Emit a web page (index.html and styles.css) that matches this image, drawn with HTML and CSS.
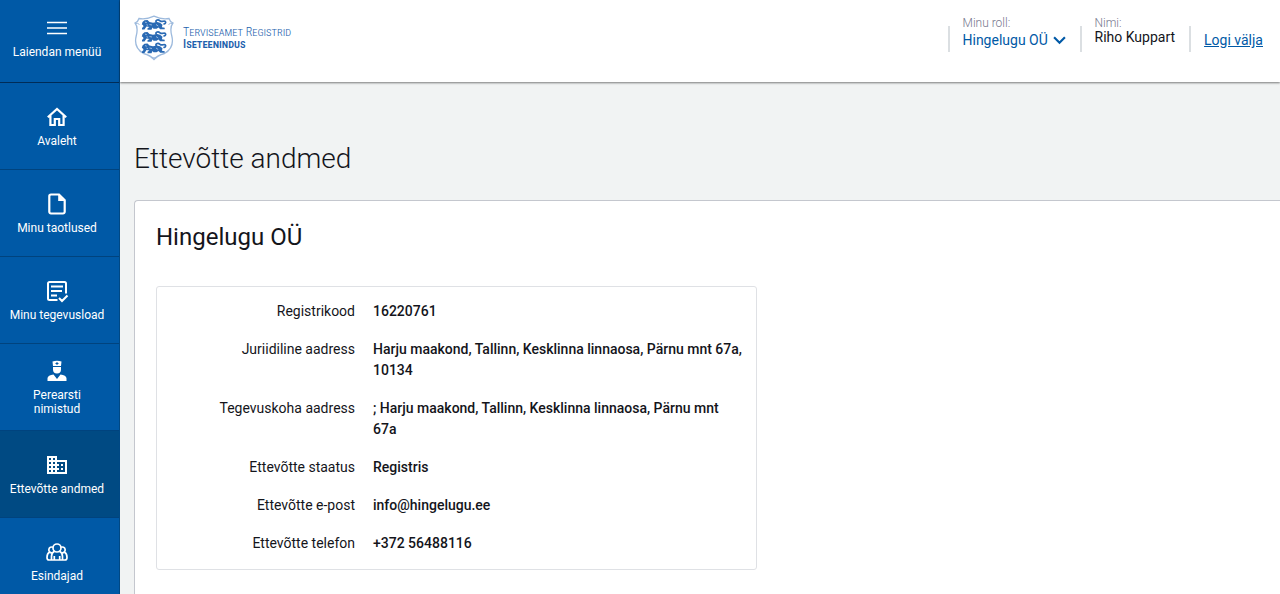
FILE: index.html
```
<!DOCTYPE html>
<html lang="et">
<head>
<meta charset="utf-8">
<meta name="viewport" content="width=device-width, initial-scale=1">
<title>Ettevõtte andmed</title>
<link rel="stylesheet" href="styles.css">
</head>
<body>
<div class="app">
  <nav class="sidebar" aria-label="Peamenüü">
    <button class="nav-item nav-toggle" type="button">
      <svg class="nav-icon" viewBox="0 0 24 24" aria-hidden="true"><path d="M2 6.500h20M2 12h20M2 17.500h20" fill="none" stroke="currentColor" stroke-width="1.300"/></svg>
      <span>Laiendan menüü</span>
    </button>
    <a class="nav-item" href="#">
      <svg class="nav-icon" viewBox="0 0 24 24" aria-hidden="true"><path d="M2.800 12.200 12 3.900l9.200 8.300M5.400 10.500V20h4.400v-6h4.400v6h4.400v-9.500" fill="none" stroke="currentColor" stroke-width="2.200"/></svg>
      <span>Avaleht</span>
    </a>
    <a class="nav-item" href="#">
      <svg class="nav-icon" viewBox="0 0 24 24" aria-hidden="true"><path d="M14 2.500H6A1.700 1.700 0 0 0 4.300 4.200v15.600A1.700 1.700 0 0 0 6 21.500h12a1.700 1.700 0 0 0 1.700-1.700V8.200z" fill="none" stroke="currentColor" stroke-width="2.200"/><path d="M13.200 2.500v6.500h6.500z" fill="currentColor"/></svg>
      <span>Minu taotlused</span>
    </a>
    <a class="nav-item" href="#">
      <svg class="nav-icon" viewBox="0 0 24 24" aria-hidden="true"><path d="M12.500 21H4.500A1.500 1.500 0 0 1 3 19.500v-15A1.500 1.500 0 0 1 4.500 3h15A1.500 1.500 0 0 1 21 4.500v10M6 7.500h12M6 12h11M6 16.500h6M14 19l3 3 5.500-5.500" fill="none" stroke="currentColor" stroke-width="2"/></svg>
      <span>Minu tegevusload</span>
    </a>
    <a class="nav-item" href="#">
      <svg class="nav-icon" viewBox="0 0 24 24" aria-hidden="true"><path fill="currentColor" fill-rule="evenodd" d="M7.500 2.600Q12 .8 16.500 2.600L16 7H8zM11.500 3v1h-1v1h1v1h1V5h1V4h-1V3z"/><path fill="currentColor" d="M8 8h8v2.500a4 4 0 0 1-8 0zM2.500 22v-2.700c0-2 2.500-3.300 6-3.800L12 20l3.500-4.500c3.500.5 6 1.800 6 3.800V22z"/></svg>
      <span>Perearsti<br>nimistud</span>
    </a>
    <a class="nav-item nav-item-active" href="#" aria-current="page">
      <svg class="nav-icon" viewBox="0 0 24 24" aria-hidden="true"><path fill="currentColor" d="M12 7V3H2v18h20V7H12zM6 19H4v-2h2v2zm0-4H4v-2h2v2zm0-4H4V9h2v2zm0-4H4V5h2v2zm4 12H8v-2h2v2zm0-4H8v-2h2v2zm0-4H8V9h2v2zm0-4H8V5h2v2zm10 12h-8v-2h2v-2h-2v-2h2v-2h-2V9h8v10zm-2-8h-2v2h2v-2zm0 4h-2v2h2v-2z"/></svg>
      <span>Ettevõtte andmed</span>
    </a>
    <a class="nav-item" href="#">
      <svg class="nav-icon" viewBox="0 0 24 24" aria-hidden="true"><g fill="none" stroke="currentColor" stroke-width="1.700"><circle cx="12" cy="8" r="4"/><path d="M8 7.300a2.900 2.900 0 1 0-1 5.500M16 7.300a2.900 2.900 0 1 1 1 5.500M6.500 20v-3.500c0-2.500 1.500-4.500 3-5.200M17.500 20v-3.500c0-2.500-1.500-4.500-3-5.200M4.300 12.300C2.600 13.300 2 15 2 17.500 2 19.300 2.800 20 4 20h16c1.200 0 2-.7 2-2.500 0-2.500-.6-4.200-2.300-5.200M9.300 20v-4M14.700 20v-4"/></g></svg>
      <span>Esindajad</span>
    </a>
  </nav>

  <div class="content">
    <header class="topbar">
      <a class="brand" href="#">
        <svg class="crest" viewBox="0 0 40 46" aria-hidden="true">
          <defs>
            <g id="lion">
              <path d="M1 2.500 3 .8l3-.4L8 2.500l3.500.8 4-.8 3 .8 2.500 2-.6 2.500 2.800.5v1.500h-4.500L17 8l-2 1.200h-3L11 8l-1 2.200H6V8.800L8 7.500 5 7l-2 3H.5V8.500L2 7l-.5-1.500L.3 5z" fill="#2a6ab4"/>
              <path d="M15.500 4c-3-3.500 1-4.500 3-2.700s4-.7 5.200.6-.2 2.900-1.800 2.400" fill="none" stroke="#2a6ab4" stroke-width="1.700"/>
              <path d="m3.500 2.600 1.800.6M8 5l2.500.5M14.500 5l2.200 1.500M5 5.200l1.500.6" fill="none" stroke="#c9daed" stroke-width=".7"/>
            </g>
          </defs>
          <path d="M5 3.500C10 4.500 15 3.500 20 1.200 25 3.500 30 4.500 35 3.500c.5 2 1.800 3.500 4 4.500-3 3.500-2.500 8-1.200 13 2 8-.4 13.500-7.300 17.500C25 40 22 42 20 44.500 18 42 15 40 9.500 38.500 2.600 34.500.2 29 2.200 21 3.500 16 4 11.500 1 8c2.200-1 3.500-2.500 4-4.500z" fill="#fff" stroke="#9dbadd" stroke-width="1.300"/>
          <path d="M1 8.500Q4 7.800 5.500 9.500M39 8.500q-3-.7-4.500 1M17.500 42.800h5" fill="none" stroke="#9dbadd"/>
          <use href="#lion" x="7.500" y="4.500"/><use href="#lion" x="7.500" y="16.500"/><use href="#lion" x="7.500" y="28"/>
        </svg>
        <span class="brand-text"><span>Terviseamet Registrid</span><strong>Iseteenindus</strong></span>
      </a>
      <div class="account">
        <div class="account-part">
          <label class="account-label" for="role">Minu roll:</label>
          <div class="role">
            <select class="role-select" id="role"><option>Hingelugu OÜ</option></select>
            <svg class="chevron" viewBox="0 0 12 8" aria-hidden="true"><path d="m1 1 5 5 5-5" fill="none" stroke="currentColor" stroke-width="2"/></svg>
          </div>
        </div>
        <div class="account-part">
          <span class="account-label">Nimi:</span>
          <span class="account-name">Riho Kuppart</span>
        </div>
        <div class="account-part account-exit"><a class="logout" href="#">Logi välja</a></div>
      </div>
    </header>
    <main class="main">
      <h1 class="page-title">Ettevõtte andmed</h1>
      <section class="card">
        <h2 class="company">Hingelugu OÜ</h2>
        <div class="details">
          <table class="details-table">
            <tbody>
              <tr><th scope="row">Registrikood</th><td>16220761</td></tr>
              <tr><th scope="row">Juriidiline aadress</th><td>Harju maakond, Tallinn, Kesklinna linnaosa, Pärnu mnt 67a, 10134</td></tr>
              <tr><th scope="row">Tegevuskoha aadress</th><td>; Harju maakond, Tallinn, Kesklinna linnaosa, Pärnu mnt 67a</td></tr>
              <tr><th scope="row">Ettevõtte staatus</th><td>Registris</td></tr>
              <tr><th scope="row">Ettevõtte e-post</th><td>info@hingelugu.ee</td></tr>
              <tr><th scope="row">Ettevõtte telefon</th><td>+372 56488116</td></tr>
            </tbody>
          </table>
        </div>
      </section>
    </main>
  </div>
</div>
</body>
</html>
```
FILE: styles.css
```
* {
  box-sizing: border-box;
}

body {
  margin: 0;
  background: #f1f3f3;
  color: #14151b;
  font: 14px/21px Roboto, sans-serif;
}

.app {
  display: flex;
  height: 100vh;
  overflow: hidden;
}

/* Sidebar */
.sidebar {
  flex: 0 0 120px;
  background: #0059a6;
  border-right: 1px solid #004884;
  overflow: hidden;
}

.nav-item {
  display: flex;
  flex-direction: column;
  align-items: center;
  justify-content: center;
  gap: 5px;
  width: 100%;
  height: 87px;
  padding: 1px 5px 0 0;
  border: 0;
  border-bottom: 1px solid #00437e;
  background: transparent;
  color: #fff;
  font: 12px/14px Roboto, sans-serif;
  text-align: center;
  text-decoration: none;
}

.nav-toggle {
  height: 83px;
  padding-top: 0;
  padding-bottom: 8px;
  border-bottom-color: #002c57;
}

.nav-item-active {
  background: #004a83;
}

.nav-icon {
  width: 24px;
  height: 24px;
}

/* Top bar */
.content {
  flex: 1;
  min-width: 0;
}

.topbar {
  display: flex;
  justify-content: space-between;
  align-items: flex-start;
  height: 82px;
  padding: 15px 17px 0 14px;
  background: #fff;
  box-shadow: 0 1px 2px rgba(0, 0, 0, 0.5);
}

.brand {
  display: flex;
  align-items: center;
  gap: 9px;
  color: #1d61ad;
  text-decoration: none;
}

.crest {
  width: 40px;
  height: 46px;
}

.brand-text {
  display: flex;
  flex-direction: column;
  font-family: "Roboto Condensed", Roboto, sans-serif;
  font-size: 12px;
  font-weight: 300;
  line-height: 12px;
  font-variant: small-caps;
}

.brand-text strong {
  font-weight: 500;
}

.account {
  display: flex;
  align-items: flex-end;
}

.account-part {
  display: flex;
  flex-direction: column;
  position: relative;
  height: 37px;
  padding: 0 14px 0 15px;
}

.account-part::before {
  content: "";
  position: absolute;
  left: 0;
  bottom: 0;
  width: 2px;
  height: 26px;
  background: #dbdfe2;
}

.account-label {
  color: #77788e;
  font-size: 12px;
  font-weight: 300;
  line-height: 16px;
}

.account-name {
  line-height: 13px;
}

.role {
  display: flex;
  align-items: center;
  gap: 4px;
  color: #0059a6;
}

.role-select {
  appearance: none;
  margin: 0;
  padding: 0;
  border: 0;
  background: transparent;
  color: inherit;
  font: 14px/18px Roboto, sans-serif;
}

.chevron {
  width: 13px;
  height: 9px;
}

.account-exit {
  justify-content: flex-end;
  padding-right: 0;
}

.logout {
  color: #0059a6;
  line-height: 24px;
}

/* Page */
.main {
  padding: 59px 0 0 14px;
}

.page-title {
  margin: 0 0 23px;
  font-size: 28px;
  font-weight: 300;
  line-height: 36px;
}

.card {
  min-height: 100vh;
  padding: 20px 21px;
  border: 1px solid #c4c7ce;
  border-right: 0;
  border-radius: 4px 0 0 0;
  background: #fff;
}

.company {
  margin: 0 0 33px;
  font-size: 24px;
  font-weight: 400;
  line-height: 32px;
}

.details {
  max-width: 601px;
  padding: 5px 7px 7px;
  border: 1px solid #dfe1e5;
  border-radius: 3px;
}

.details-table {
  width: 100%;
  border-collapse: collapse;
}

.details-table th,
.details-table td {
  padding: 9px 6px 8px 9px;
  text-align: left;
  vertical-align: top;
}

.details-table th {
  width: 200px;
  padding-right: 9px;
  font-weight: 400;
  text-align: right;
}

.details-table td {
  font-weight: 500;
}
```
